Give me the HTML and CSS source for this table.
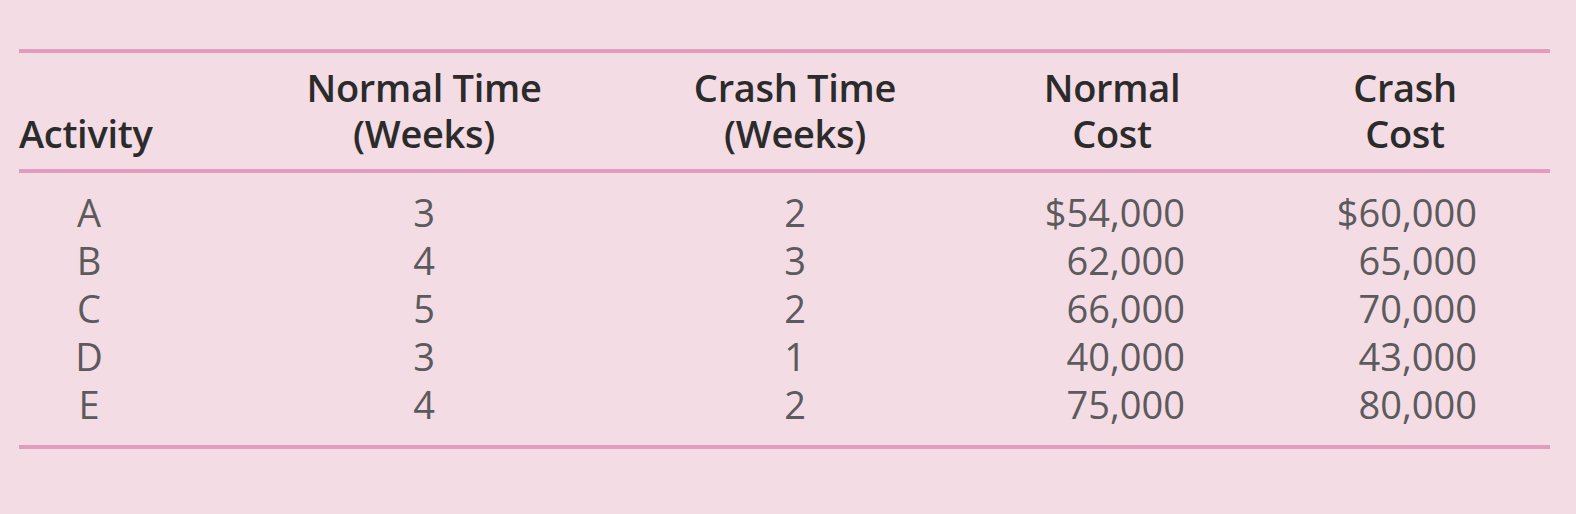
FILE: index.html
```html
<!DOCTYPE html>
<html>
<head>
<meta charset="utf-8">
<link rel="stylesheet" href="styles.css">
</head>
<body>
<div class="page">
  <div class="table">
    <div class="head">
      <div class="h c1"><span>Activity</span></div>
      <div class="h c2">Normal Time<br>(Weeks)</div>
      <div class="h c3">Crash Time<br>(Weeks)</div>
      <div class="h c4">Normal<br>Cost</div>
      <div class="h c5">Crash<br>Cost</div>
      <div class="h c6"></div>
    </div>
    <div class="body">
      <div class="d c1">A<br>B<br>C<br>D<br>E</div>
      <div class="d c2">3<br>4<br>5<br>3<br>4</div>
      <div class="d c3">2<br>3<br>2<br>1<br>2</div>
      <div class="d c4 num">$54,000<br>62,000<br>66,000<br>40,000<br>75,000</div>
      <div class="d c5 num">$60,000<br>65,000<br>70,000<br>43,000<br>80,000</div>
      <div class="d c6"></div>
    </div>
  </div>
</div>
</body>
</html>
```
FILE: styles.css
```css
html, body {
  margin: 0;
  padding: 0;
  background: #f3dce4;
}
.page {
  width: 1576px;
  height: 514px;
  padding: 49px 26px 0 19px;
  box-sizing: border-box;
  font-family: "Open Sans", "Liberation Sans", sans-serif;
}
.table {
  width: 1531px;
  border-top: 4px solid #e19cbe;
  border-bottom: 4px solid #e19cbe;
}
.head, .body {
  display: grid;
  grid-template-columns: 140px 530px 212px 422px 164px 1fr;
}
.head {
  padding: 11px 0 13px;
  border-bottom: 4px solid #e19cbe;
  font-size: 38px;
  line-height: 46px;
  font-weight: 600;
  color: #2b2b2b;
  letter-spacing: -0.3px;
}
.h {
  text-align: center;
  white-space: nowrap;
}
.h.c1 {
  text-align: left;
  display: flex;
  align-items: flex-end;
}
.body {
  padding: 15px 0 17px;
  font-size: 38px;
  line-height: 48px;
  font-weight: 400;
  color: #5c5a5c;
}
.d {
  text-align: center;
}
.d.num {
  text-align: right;
}
.d.c4 {
  padding-right: 138px;
}
.d.c5 {
  padding-right: 10px;
}
```
